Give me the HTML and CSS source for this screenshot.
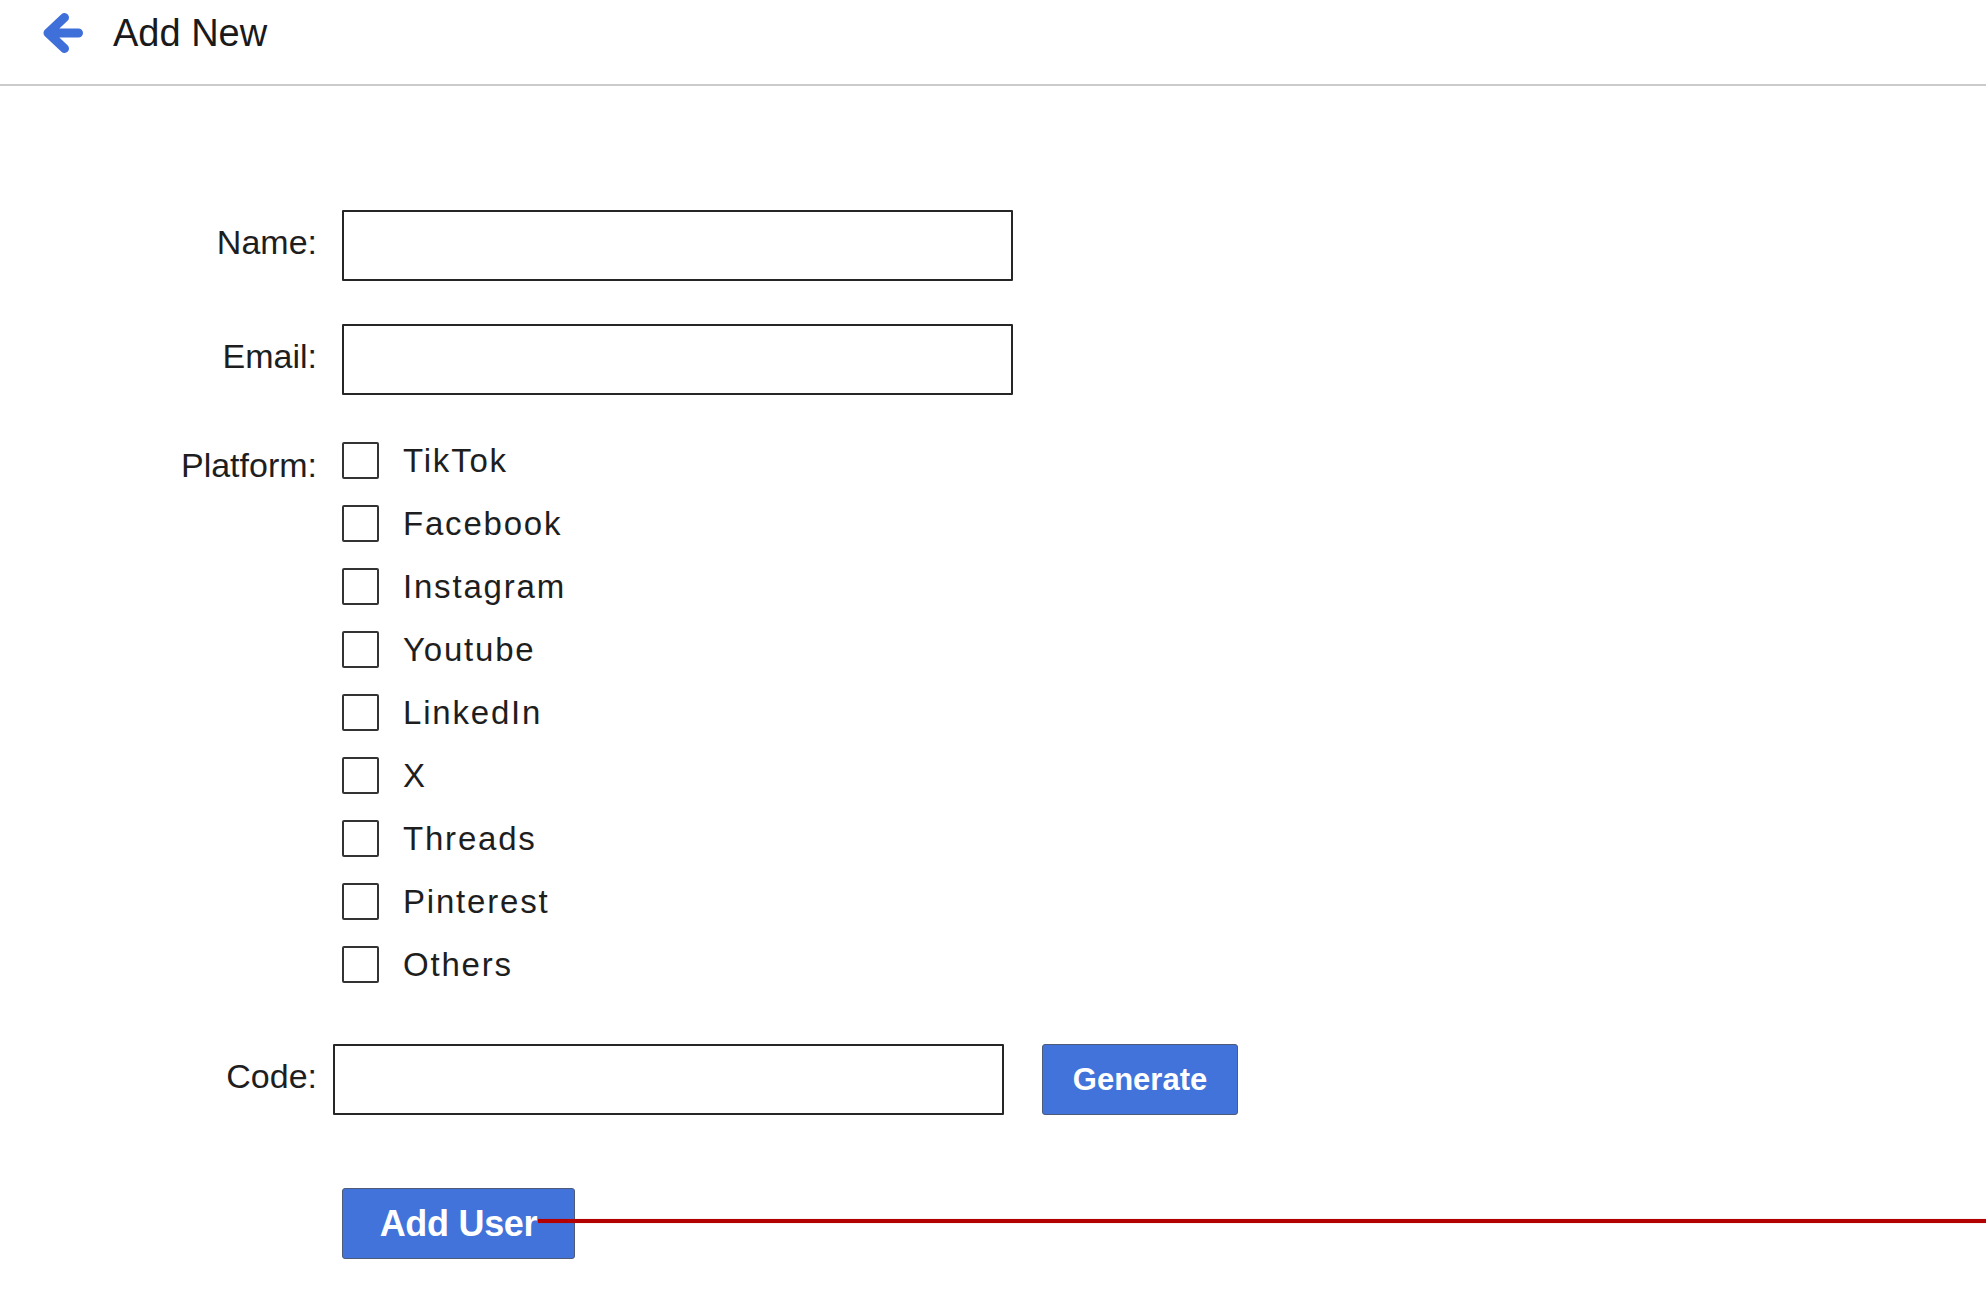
FILE: index.html
```html
<!DOCTYPE html>
<html lang="en">
<head>
<meta charset="utf-8">
<title>Add New</title>
<link rel="stylesheet" href="styles.css">
</head>
<body>
<header class="topbar">
  <svg class="back-icon" width="40" height="40" viewBox="0 0 40 40" aria-hidden="true">
    <path d="M21.5 4.5 L5 20 L21.5 35.5 M5 20 H35.5" fill="none" stroke="#3f6fd8" stroke-width="9" stroke-linecap="round" stroke-linejoin="round"/>
  </svg>
  <h1 class="title">Add New</h1>
</header>

<main class="form">
  <div class="row row-name">
    <label class="label" for="name">Name:</label>
    <input class="text-input" id="name" type="text">
  </div>

  <div class="row row-email">
    <label class="label" for="email">Email:</label>
    <input class="text-input" id="email" type="text">
  </div>

  <div class="row row-platform">
    <span class="label label-top">Platform:</span>
    <ul class="checklist">
      <li class="check-item"><span class="checkbox"></span><span class="check-text">TikTok</span></li>
      <li class="check-item"><span class="checkbox"></span><span class="check-text">Facebook</span></li>
      <li class="check-item"><span class="checkbox"></span><span class="check-text">Instagram</span></li>
      <li class="check-item"><span class="checkbox"></span><span class="check-text">Youtube</span></li>
      <li class="check-item"><span class="checkbox"></span><span class="check-text">LinkedIn</span></li>
      <li class="check-item"><span class="checkbox"></span><span class="check-text">X</span></li>
      <li class="check-item"><span class="checkbox"></span><span class="check-text">Threads</span></li>
      <li class="check-item"><span class="checkbox"></span><span class="check-text">Pinterest</span></li>
      <li class="check-item"><span class="checkbox"></span><span class="check-text">Others</span></li>
    </ul>
  </div>

  <div class="row row-code">
    <label class="label" for="code">Code:</label>
    <div class="code-field">
      <input class="text-input" id="code" type="text">
      <button class="btn btn-generate" type="button">Generate</button>
    </div>
  </div>

  <div class="row row-action">
    <span class="label"></span>
    <div class="action-cell">
      <button class="btn btn-add" type="button">Add User</button>
    </div>
  </div>
</main>

<div class="annotation-line"></div>
</body>
</html>
```

FILE: styles.css
```css
html, body {
  margin: 0;
  padding: 0;
  background: #ffffff;
}

body {
  font-family: "Liberation Sans", Arial, sans-serif;
  color: #1e1e1e;
  width: 1986px;
  min-height: 1308px;
  overflow: hidden;
}

/* ---------- header ---------- */
.topbar {
  box-sizing: border-box;
  height: 86px;
  border-bottom: 2px solid #cbcbcb;
  display: flex;
  align-items: flex-start;
  padding: 13px 0 0 43px;
}

.back-icon {
  display: block;
  flex: none;
}

.title {
  margin: 0 0 0 30px;
  font-size: 38px;
  line-height: 40px;
  font-weight: normal;
  color: #1a1a1a;
}

/* ---------- form ---------- */
.form {
  padding-top: 124px;
  display: flex;
  flex-direction: column;
}

.row {
  display: grid;
  grid-template-columns: 317px auto;
  column-gap: 25px;
  align-items: center;
  justify-content: start;
}

.label {
  text-align: right;
  font-size: 34px;
  line-height: 40px;
  color: #1e1e1e;
  margin-bottom: 8px;
}

.label-top {
  align-self: start;
  line-height: 63px;
  padding-top: 5px;
  margin-bottom: 0;
}

.text-input {
  box-sizing: border-box;
  width: 671px;
  height: 71px;
  border: 2px solid #262626;
  border-radius: 1px;
  background: #ffffff;
  margin: 0;
  padding: 0 10px;
  font-family: inherit;
  font-size: 28px;
  outline: none;
}

.row-email {
  margin-top: 43px;
}

.row-platform {
  margin-top: 34px;
}

.checklist {
  list-style: none;
  margin: 0;
  padding: 0;
  display: flex;
  flex-direction: column;
}

.check-item {
  height: 63px;
  display: flex;
  align-items: center;
  gap: 24px;
}

.checkbox {
  box-sizing: border-box;
  width: 37px;
  height: 37px;
  border: 2px solid #333333;
  border-radius: 2px;
  background: #ffffff;
  flex: none;
}

.check-text {
  font-size: 33px;
  letter-spacing: 1.8px;
  line-height: 40px;
  color: #1e1e1e;
}

.row-code {
  margin-top: 48px;
  column-gap: 16px;
}

.code-field {
  display: flex;
  align-items: center;
  gap: 38px;
}

.btn {
  box-sizing: border-box;
  margin: 0;
  padding: 0;
  border: 1px solid #4d5a78;
  border-radius: 3px;
  background: #4173db;
  color: #ffffff;
  font-family: "Liberation Sans", Arial, sans-serif;
  font-weight: bold;
  cursor: pointer;
}

.btn-generate {
  width: 196px;
  height: 71px;
  font-size: 31px;
}

.row-action {
  margin-top: 73px;
}

.action-cell {
  display: flex;
}

.btn-add {
  width: 233px;
  height: 71px;
  font-size: 36px;
  letter-spacing: -0.3px;
}

/* annotation connector line drawn over the page */
.annotation-line {
  position: absolute;
  top: 1219px;
  left: 538px;
  right: 0;
  height: 4px;
  background: #b30000;
  box-shadow: 0 0 1px rgba(179, 0, 0, 0.5);
}
```
